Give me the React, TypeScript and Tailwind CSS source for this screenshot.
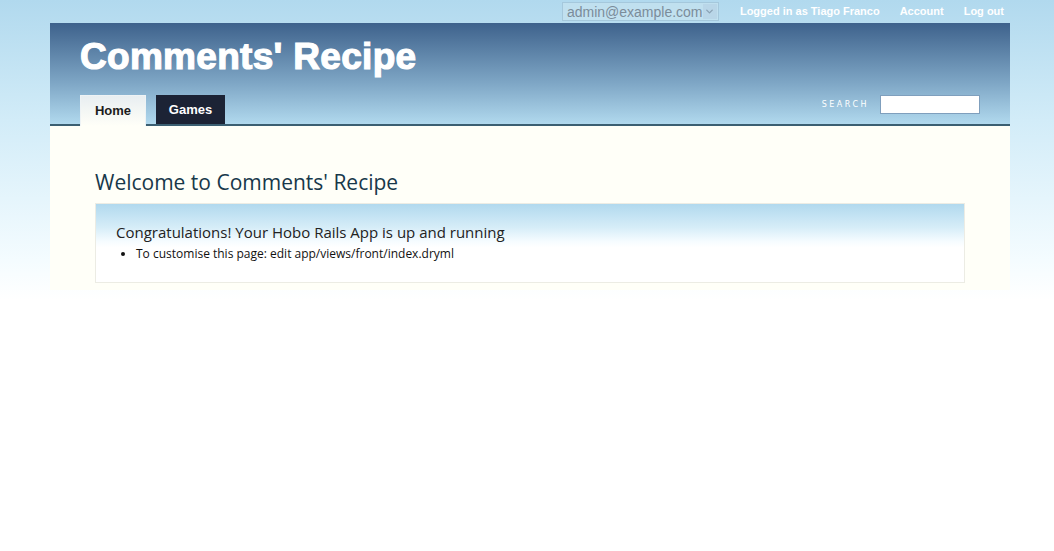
import { ChevronDown } from 'lucide-react';

export default function App() {
  return (
    <div className="min-h-[551px] w-full bg-[linear-gradient(to_bottom,#b1d9ee_0px,#d2ecf8_120px,#f4fcff_260px,#ffffff_300px)] font-['Liberation_Sans',sans-serif]">
      {/* account bar */}
      <div className="flex h-[23px] w-[1054px] items-center justify-end pr-[50px]">
        <div className="mr-[21px] flex h-[19px] w-[157px] items-center border border-[#a5c8dc] bg-[#c6e2f0]/70">
          <span className="flex-1 pl-[4px] text-[14px] leading-none text-[#7b8c9a]">admin@example.com</span>
          <span className="mr-[1px] flex h-[15px] w-[14px] items-center justify-center bg-[#b9d6e8]">
            <ChevronDown className="h-[11px] w-[11px] text-[#8aa2b4]" strokeWidth={3} />
          </span>
        </div>
        <a className="text-[11px] font-bold text-white">Logged in as Tiago Franco</a>
        <a className="ml-[20px] text-[11px] font-bold text-white">Account</a>
        <a className="ml-[20px] text-[11px] font-bold text-white">Log out</a>
      </div>

      <div className="ml-[50px] w-[960px]">
        {/* header */}
        <div className="flex h-[103px] flex-col justify-between border-b-2 border-[#3b5f72] bg-[linear-gradient(to_bottom,#3e628c,#7fa7c6_60%,#b1d9ee)] pl-[30px] pr-[30px]">
          <h1 className="pt-[14px] text-[37px] font-black leading-[40px] tracking-[0.3px] text-white [-webkit-text-stroke:1.2px_white]">Comments' Recipe</h1>
          <div className="flex items-end justify-between">
            <div className="flex gap-[10px]">
              <a className="-mb-[2px] flex h-[31px] w-[66px] items-center justify-center border border-b-0 border-[#eef3f5] bg-[linear-gradient(to_bottom,#e8eef1,#fffff8)] text-[13px] font-bold text-[#1c1c1c]">Home</a>
              <a className="flex h-[29px] w-[69px] items-center justify-center bg-[#1c2335] text-[13px] font-bold text-white">Games</a>
            </div>
            <div className="mb-[10px] flex items-center">
              <span className="mr-[11px] font-['DejaVu_Sans',sans-serif] text-[8px] tracking-[2.5px] text-white">SEARCH</span>
              <input className="h-[19px] w-[100px] border border-[#7f9fbd] bg-white" />
            </div>
          </div>
        </div>

        {/* content */}
        <div className="h-[164px] bg-[#fffff8] px-[45px] pt-[43px]">
          <h2 className="font-['Open_Sans',sans-serif] text-[21px] leading-[26px] text-[#18384a]">Welcome to Comments' Recipe</h2>
          <div className="mt-[8px] h-[80px] border border-[#ecece4] bg-[linear-gradient(to_bottom,#b1d9ee,#d6edf8_30%,#f6fcff_48%,#ffffff_56%)] px-[20px] pt-[18px]">
            <p className="font-['Open_Sans',sans-serif] text-[15px] leading-[20px] text-[#222]">Congratulations! Your Hobo Rails App is up and running</p>
            <ul className="ml-[20px] mt-[3px] list-disc font-['Open_Sans',sans-serif] text-[12px] leading-[18px] text-[#111]">
              <li>To customise this page: edit app/views/front/index.dryml</li>
            </ul>
          </div>
        </div>
      </div>
    </div>
  );
}
